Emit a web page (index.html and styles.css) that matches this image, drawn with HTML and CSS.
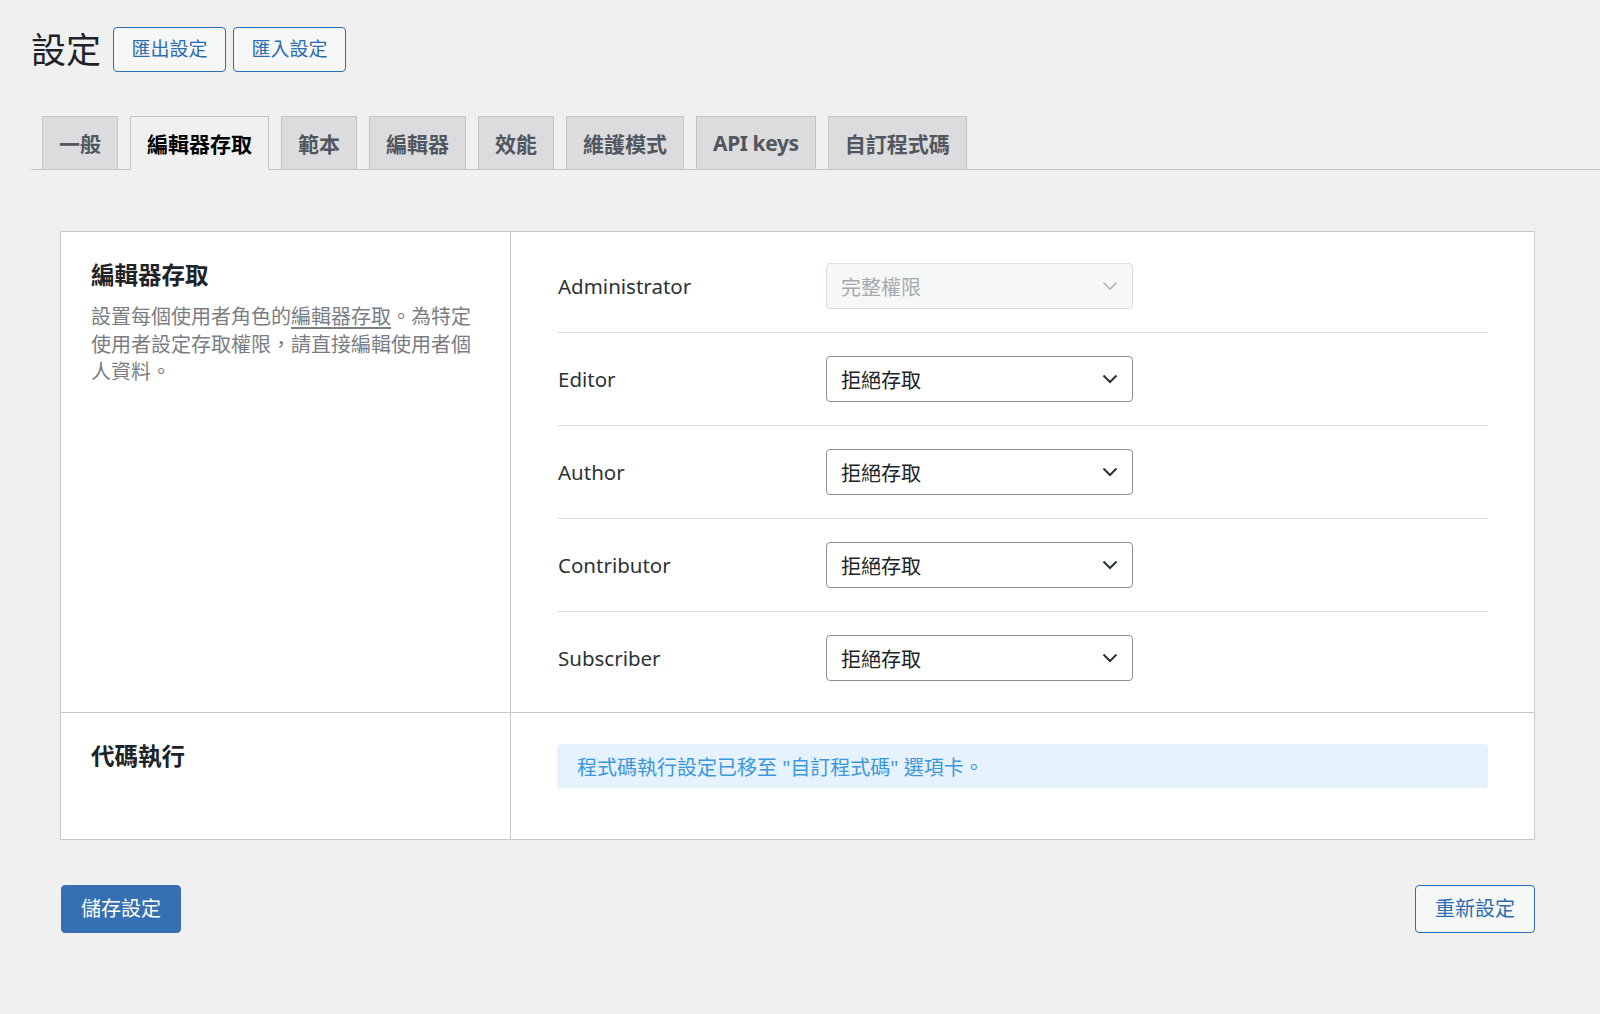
FILE: index.html
```html
<!DOCTYPE html>
<html lang="zh-Hant">
<head>
<meta charset="utf-8">
<title>設定</title>
<link rel="stylesheet" href="styles.css">
</head>
<body>
<div class="wrap">
  <div class="header">
    <h1 class="title">設定</h1>
    <a class="btn btn-outline">匯出設定</a>
    <a class="btn btn-outline">匯入設定</a>
  </div>

  <nav class="tabs">
    <a class="tab">一般</a>
    <a class="tab tab-active">編輯器存取</a>
    <a class="tab">範本</a>
    <a class="tab">編輯器</a>
    <a class="tab">效能</a>
    <a class="tab">維護模式</a>
    <a class="tab tab-latin">API keys</a>
    <a class="tab">自訂程式碼</a>
  </nav>

  <div class="content">
    <div class="panel">
      <div class="cell cell-left">
        <h2 class="sec-title">編輯器存取</h2>
        <p class="sec-desc">設置每個使用者角色的<a class="desc-link">編輯器存取</a>。為特定使用者設定存取權限，請直接編輯使用者個人資料。</p>
      </div>
      <div class="cell cell-right">
        <div class="role-row">
          <span class="role-label">Administrator</span>
          <div class="select select-disabled">
            <span class="select-text">完整權限</span>
            <svg class="chev" width="16" height="10" viewBox="0 0 16 10"><path d="M1.5 1.5 L8 8 L14.5 1.5" fill="none" stroke="currentColor" stroke-width="1.6"/></svg>
          </div>
        </div>
        <div class="role-row">
          <span class="role-label">Editor</span>
          <div class="select">
            <span class="select-text">拒絕存取</span>
            <svg class="chev" width="16" height="10" viewBox="0 0 16 10"><path d="M1.5 1.5 L8 8 L14.5 1.5" fill="none" stroke="currentColor" stroke-width="2"/></svg>
          </div>
        </div>
        <div class="role-row">
          <span class="role-label">Author</span>
          <div class="select">
            <span class="select-text">拒絕存取</span>
            <svg class="chev" width="16" height="10" viewBox="0 0 16 10"><path d="M1.5 1.5 L8 8 L14.5 1.5" fill="none" stroke="currentColor" stroke-width="2"/></svg>
          </div>
        </div>
        <div class="role-row">
          <span class="role-label">Contributor</span>
          <div class="select">
            <span class="select-text">拒絕存取</span>
            <svg class="chev" width="16" height="10" viewBox="0 0 16 10"><path d="M1.5 1.5 L8 8 L14.5 1.5" fill="none" stroke="currentColor" stroke-width="2"/></svg>
          </div>
        </div>
        <div class="role-row">
          <span class="role-label">Subscriber</span>
          <div class="select">
            <span class="select-text">拒絕存取</span>
            <svg class="chev" width="16" height="10" viewBox="0 0 16 10"><path d="M1.5 1.5 L8 8 L14.5 1.5" fill="none" stroke="currentColor" stroke-width="2"/></svg>
          </div>
        </div>
      </div>

      <div class="cell cell-left cell-bottom">
        <h2 class="sec-title">代碼執行</h2>
      </div>
      <div class="cell cell-right cell-bottom cell-notice">
        <div class="notice">程式碼執行設定已移至 "自訂程式碼" 選項卡。</div>
      </div>
    </div>

    <div class="footer">
      <a class="btn btn-primary">儲存設定</a>
      <a class="btn btn-outline btn-lg">重新設定</a>
    </div>
  </div>
</div>
</body>
</html>
```

FILE: styles.css
```css
* { box-sizing: border-box; }

html, body {
  margin: 0;
  padding: 0;
}

body {
  background: #f0f0f1;
  font-family: "Noto Sans", "Noto Sans CJK TC", sans-serif;
  color: #1d2327;
}

.wrap {
  padding-left: 31px;
}

.header {
  display: flex;
  align-items: center;
  padding-top: 27px;
}

.title {
  margin: 0 12px 0 0;
  font-size: 35px;
  font-weight: 400;
  line-height: 1;
  color: #1d2327;
}

.btn {
  display: inline-flex;
  align-items: center;
  justify-content: center;
  border-radius: 4px;
  font-size: 19px;
  line-height: 1;
  text-decoration: none;
  cursor: pointer;
}

.btn-outline {
  height: 45px;
  width: 113px;
  margin-right: 7px;
  border: 1.5px solid #2b6db3;
  background: #f6f7f7;
  color: #2b6db3;
}

.tabs {
  display: flex;
  gap: 12px;
  margin-top: 44px;
  padding-left: 11px;
  border-bottom: 1px solid #c3c4c7;
}

.tab {
  display: flex;
  align-items: center;
  height: 54px;
  padding: 0 16px;
  margin-bottom: -1px;
  border: 1px solid #c3c4c7;
  background: #dcdcde;
  color: #50575e;
  font-size: 21px;
  font-weight: 700;
  white-space: nowrap;
}

.tab-latin {
  letter-spacing: -0.4px;
}

.tab-active {
  background: #f0f0f1;
  border-bottom-color: #f0f0f1;
  color: #000;
}

.content {
  margin: 61px 65px 0 29px;
}

.panel {
  display: grid;
  grid-template-columns: 450px 1fr;
  background: #fff;
  border: 1.5px solid #c8c9cc;
}

.cell-left {
  border-right: 1.5px solid #c8c9cc;
  padding: 28px 30px 20px 30px;
}

.cell-bottom {
  border-top: 1.5px solid #c8c9cc;
}

.sec-title {
  margin: 0;
  font-size: 23.5px;
  font-weight: 700;
  line-height: 30px;
  color: #1d2327;
}

.sec-desc {
  margin: 13px 0 0;
  font-size: 20px;
  line-height: 27.5px;
  color: #7a7d82;
}

.desc-link {
  color: #7a7d82;
  text-decoration: underline;
  text-underline-offset: 3px;
}

.cell-right {
  padding: 8px 46px 8px 47px;
}

.role-row {
  display: flex;
  align-items: center;
  padding: 23px 0;
  border-bottom: 1.5px solid #dcdcde;
}

.role-row:last-child {
  border-bottom: none;
}

.role-label {
  width: 268px;
  font-size: 20.5px;
  color: #2c3338;
}

.select {
  display: flex;
  align-items: center;
  justify-content: space-between;
  width: 307px;
  height: 46px;
  padding: 0 14px 0 14px;
  border: 1.5px solid #8c8f94;
  border-radius: 4px;
  background: #fff;
  color: #1d2327;
  font-size: 20px;
}

.select .chev {
  color: #2c3338;
}

.select-disabled {
  background: #f6f7f7;
  border-color: #dcdcde;
  color: #a7aaad;
}

.select-disabled .chev {
  color: #b4b6b9;
}

.cell-notice {
  padding: 31px 46px 51px 46px;
}

.notice {
  display: flex;
  align-items: center;
  height: 44px;
  padding: 0 20px;
  border-radius: 4px;
  background: #e6f2fd;
  color: #3d98db;
  font-size: 20px;
}

.footer {
  display: flex;
  justify-content: space-between;
  margin-top: 45px;
  padding-left: 1px;
}

.btn-primary {
  width: 120px;
  height: 48px;
  background: #3670b3;
  border: 1px solid #3670b3;
  color: #fff;
  font-size: 20px;
}

.btn-lg {
  width: 120px;
  height: 48px;
  margin-right: 0;
  font-size: 20px;
}
```
